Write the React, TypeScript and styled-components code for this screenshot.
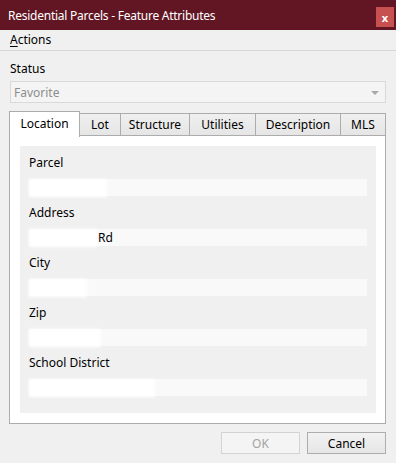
import React from "react";
import styled, { createGlobalStyle } from "styled-components";

const Global = createGlobalStyle`
  html, body { margin: 0; padding: 0; background: #f0f0f0; }
  body { font-family: "Noto Sans", "Open Sans", sans-serif; font-size: 12px; color: #000; }
  * { box-sizing: border-box; }
`;

const Window = styled.div`
  width: 396px;
  height: 463px;
  background: #f0f0f0;
  display: flex;
  flex-direction: column;
  overflow: hidden;
`;

const TitleBar = styled.div`
  height: 30px;
  background: #621624;
  color: #fff;
  display: flex;
  align-items: center;
  justify-content: space-between;
  padding: 0 2px 0 8px;
  font-size: 12px;
  letter-spacing: -0.25px;
`;

const CloseBtn = styled.div`
  width: 18px;
  height: 20px;
  background: #c75050;
  color: #fff;
  font-size: 11px;
  font-weight: bold;
  display: flex;
  align-items: center;
  justify-content: center;
  margin-top: 4px;
  letter-spacing: 0;
`;

const MenuBar = styled.div`
  height: 21px;
  border-bottom: 1px solid #d7d7d7;
  padding-left: 10px;
  display: flex;
  align-items: center;
  line-height: 16px;
`;

const U = styled.span`
  text-decoration: underline;
  text-underline-offset: 2px;
`;

const Body = styled.div`
  padding: 0 10px 0 9px;
  display: flex;
  flex-direction: column;
`;

const FieldLabel = styled.div`
  line-height: 16px;
  margin-top: 10px;
  padding-left: 1px;
`;

const Combo = styled.div`
  margin-top: 4px;
  margin-left: 1px;
  height: 22px;
  border: 1px solid #d9d9d9;
  background: #f4f4f4;
  color: #8c8c8c;
  display: flex;
  align-items: center;
  justify-content: space-between;
  padding: 0 6px 0 3px;
`;

const Arrow = styled.div`
  width: 0;
  height: 0;
  border-left: 4px solid transparent;
  border-right: 4px solid transparent;
  border-top: 4px solid #a8a8a8;
  margin-top: 1px;
`;

const TabStrip = styled.div`
  margin-top: 7px;
  height: 26px;
  display: flex;
  align-items: flex-end;
  position: relative;
  z-index: 1;
`;

const Tab = styled.div<{ $w: number; $active?: boolean }>`
  width: ${(p) => p.$w}px;
  height: ${(p) => (p.$active ? 26 : 23)}px;
  margin-right: -1px;
  border: 1px solid #acacac;
  border-bottom: ${(p) => (p.$active ? "none" : "1px solid #acacac")};
  background: ${(p) => (p.$active ? "#fff" : "linear-gradient(#f0f0f0, #e5e5e5)")};
  display: flex;
  align-items: center;
  justify-content: center;
  padding-bottom: ${(p) => (p.$active ? 2 : 0)}px;
  position: relative;
  z-index: ${(p) => (p.$active ? 2 : 1)};
  margin-bottom: ${(p) => (p.$active ? -1 : 0)}px;
  &:last-child { margin-right: 0; }
`;

const Panel = styled.div`
  margin-top: -1px;
  height: 289px;
  border: 1px solid #acacac;
  background: #fff;
  padding: 10px 9px 10px 10px;
`;

const Inner = styled.div`
  height: 100%;
  background: #f0f0f0;
  padding: 9px 9px 0 9px;
  display: flex;
  flex-direction: column;
`;

const Field = styled.div`
  display: flex;
  flex-direction: column;
  margin-bottom: 9px;
`;

const Label = styled.div`
  line-height: 16px;
  height: 16px;
  margin-bottom: 8px;
`;

const Input = styled.div`
  height: 17px;
  background: #f9f9f9;
  display: flex;
  align-items: center;
  line-height: 16px;
`;

const Blob = styled.span<{ $w: number }>`
  display: inline-block;
  width: ${(p) => p.$w}px;
  height: 14px;
  margin-left: 2px;
  background: #ffffff;
  box-shadow: 0 0 3px 2px #fff;
`;

const Extra = styled.span`
  margin-left: 3px;
`;

const Footer = styled.div`
  margin-top: 8px;
  display: flex;
  justify-content: flex-end;
  gap: 7px;
`;

const Button = styled.div<{ $disabled?: boolean }>`
  width: 79px;
  height: 22px;
  border: 1px solid ${(p) => (p.$disabled ? "#d3d3d3" : "#adadad")};
  background: ${(p) => (p.$disabled ? "#f4f4f4" : "linear-gradient(#f2f2f2, #e6e6e6)")};
  color: ${(p) => (p.$disabled ? "#a3a3a3" : "#000")};
  display: flex;
  align-items: center;
  justify-content: center;
`;

const tabs: [string, number][] = [
  ["Location", 71],
  ["Lot", 42],
  ["Structure", 70],
  ["Utilities", 67],
  ["Description", 86],
  ["MLS", 46],
];

const fields: { label: string; blob: number; extra?: string }[] = [
  { label: "Parcel", blob: 74 },
  { label: "Address", blob: 64, extra: "Rd" },
  { label: "City", blob: 54 },
  { label: "Zip", blob: 68 },
  { label: "School District", blob: 122 },
];

export default function App() {
  return (
    <>
      <Global />
      <Window>
        <TitleBar>
          <span>Residential Parcels - Feature Attributes</span>
          <CloseBtn>x</CloseBtn>
        </TitleBar>
        <MenuBar>
          <span>
            <U>A</U>ctions
          </span>
        </MenuBar>
        <Body>
          <FieldLabel>Status</FieldLabel>
          <Combo>
            <span>Favorite</span>
            <Arrow />
          </Combo>
          <TabStrip>
            {tabs.map(([t, w], i) => (
              <Tab key={t} $w={w} $active={i === 0}>
                {t}
              </Tab>
            ))}
          </TabStrip>
          <Panel>
            <Inner>
              {fields.map((f) => (
                <Field key={f.label}>
                  <Label>{f.label}</Label>
                  <Input>
                    <Blob $w={f.blob} />
                    {f.extra && <Extra>{f.extra}</Extra>}
                  </Input>
                </Field>
              ))}
            </Inner>
          </Panel>
          <Footer>
            <Button $disabled>OK</Button>
            <Button>Cancel</Button>
          </Footer>
        </Body>
      </Window>
    </>
  );
}
